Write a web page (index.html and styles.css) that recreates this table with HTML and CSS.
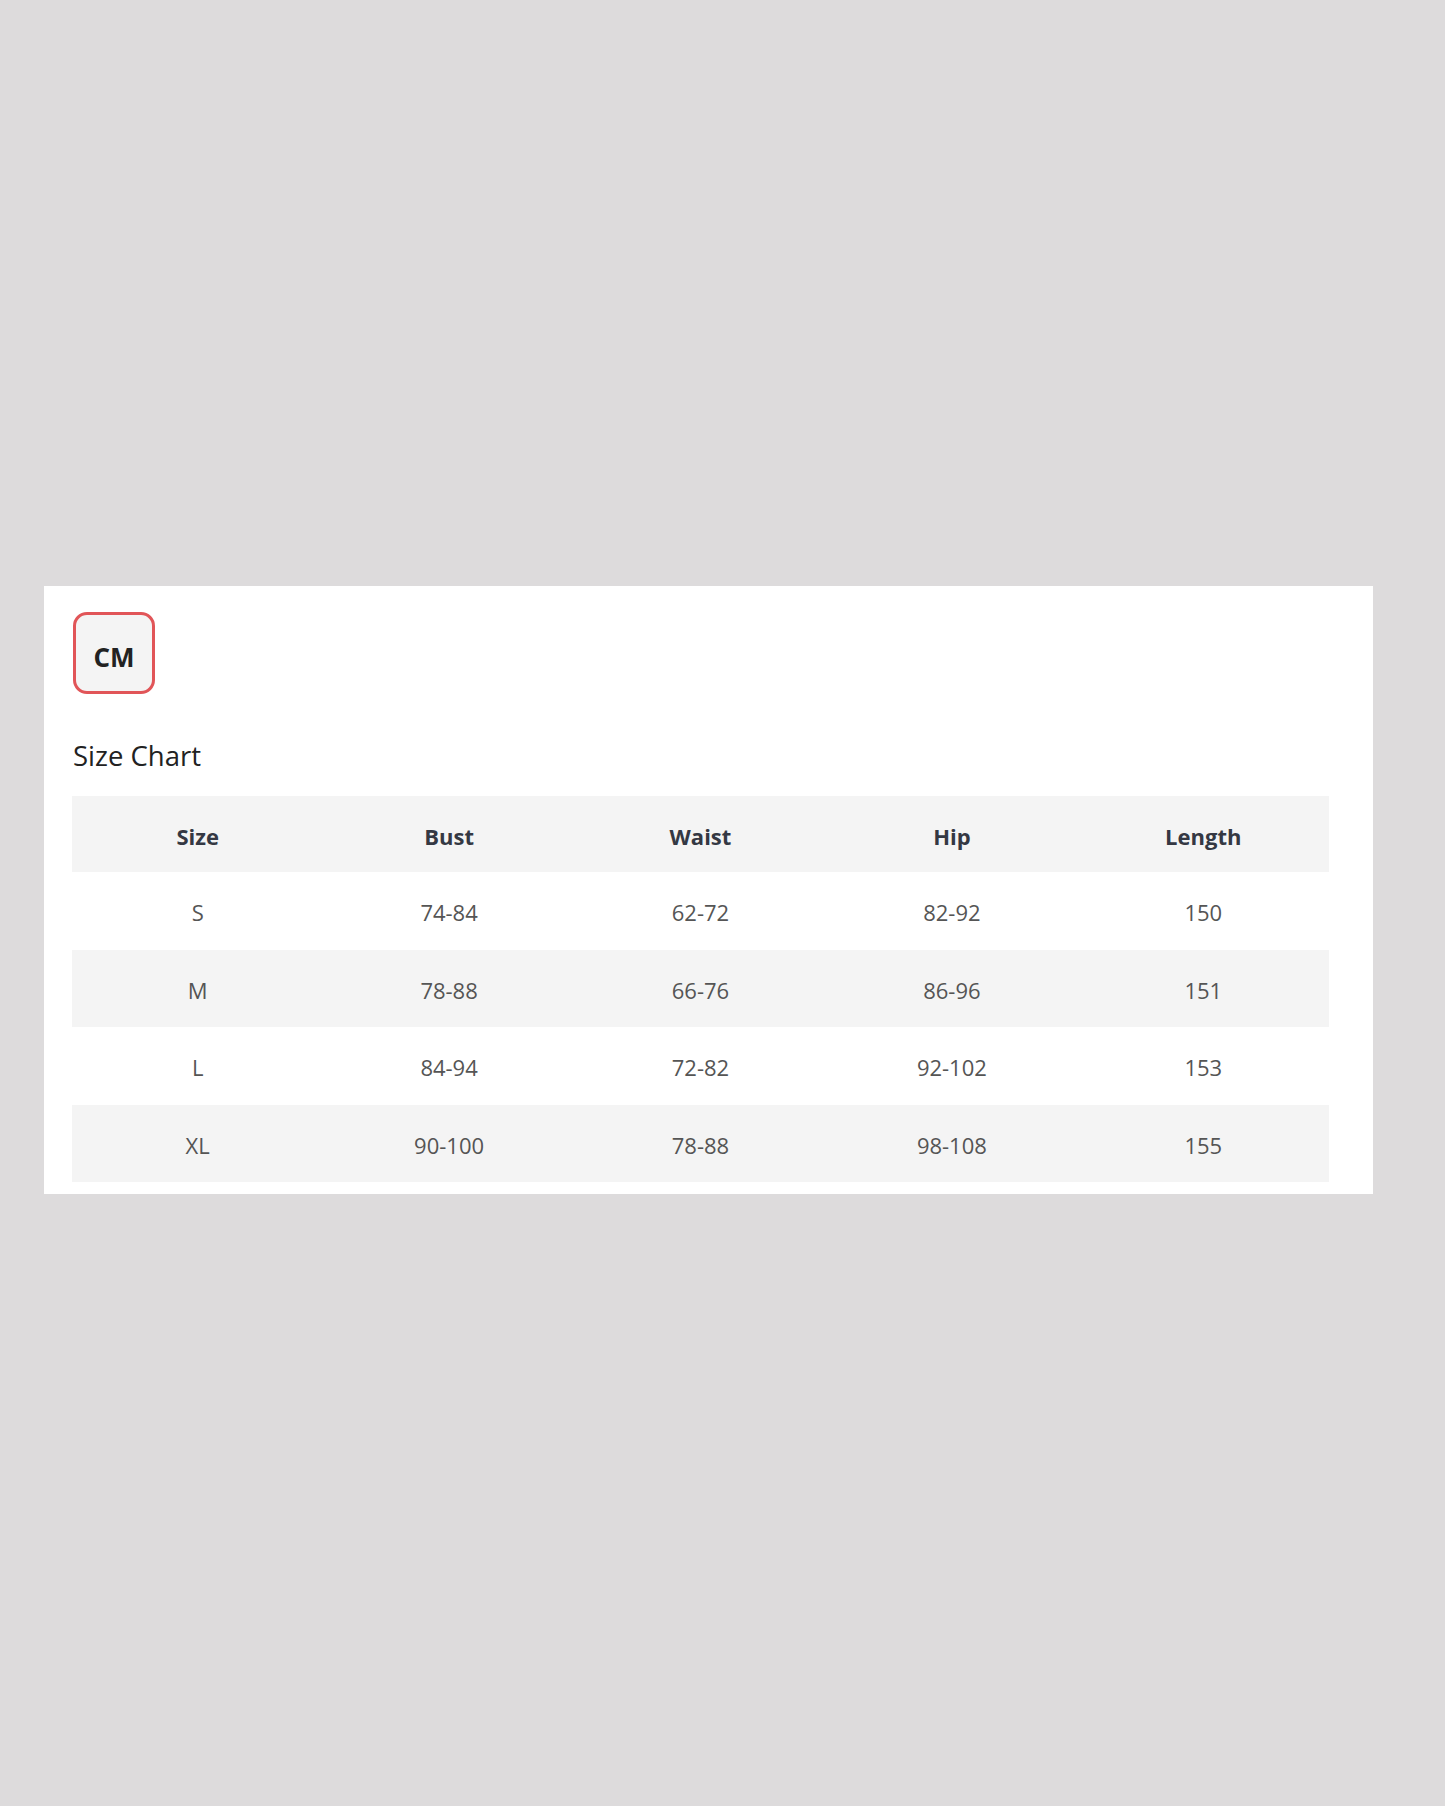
FILE: index.html
```html
<!DOCTYPE html>
<html lang="en">
<head>
<meta charset="utf-8">
<title>Size Chart</title>
<link rel="stylesheet" href="styles.css">
</head>
<body>
<div class="panel">
  <div class="unit-tab">CM</div>
  <h2 class="title">Size Chart</h2>
  <table class="chart">
    <thead>
      <tr><th>Size</th><th>Bust</th><th>Waist</th><th>Hip</th><th>Length</th></tr>
    </thead>
    <tbody>
      <tr><td>S</td><td>74-84</td><td>62-72</td><td>82-92</td><td>150</td></tr>
      <tr class="alt"><td>M</td><td>78-88</td><td>66-76</td><td>86-96</td><td>151</td></tr>
      <tr><td>L</td><td>84-94</td><td>72-82</td><td>92-102</td><td>153</td></tr>
      <tr class="alt"><td>XL</td><td>90-100</td><td>78-88</td><td>98-108</td><td>155</td></tr>
    </tbody>
  </table>
</div>
</body>
</html>
```
FILE: styles.css
```css
html, body {
  margin: 0;
  padding: 0;
  background: #dddbdc;
}
body {
  font-family: "Open Sans", "Noto Sans", sans-serif;
  padding-top: 586px;
  padding-left: 44px;
  height: 1220px;
}
.panel {
  box-sizing: border-box;
  width: 1329px;
  height: 608px;
  background: #ffffff;
  padding: 26px 44px 0 28px;
}
.unit-tab {
  box-sizing: border-box;
  width: 82px;
  height: 82px;
  margin-left: 1px;
  padding-top: 8px;
  border: 3px solid #e15558;
  border-radius: 14px;
  background: #f4f4f4;
  display: flex;
  align-items: center;
  justify-content: center;
  font-size: 26px;
  font-weight: 700;
  color: #222222;
}
.title {
  margin: 44px 0 0 1px;
  font-size: 27.5px;
  line-height: 36px;
  font-weight: 400;
  color: #222222;
}
.chart {
  margin-top: 22px;
  width: 1257px;
  border-collapse: collapse;
  table-layout: fixed;
}
.chart th, .chart td {
  padding: 3px 0 0;
  text-align: center;
  vertical-align: middle;
}
.chart thead tr {
  height: 76px;
  background: #f4f4f4;
}
.chart th {
  font-size: 22px;
  font-weight: 700;
  color: #343843;
}
.chart tbody tr {
  height: 77.5px;
}
.chart tbody tr.alt {
  background: #f4f4f4;
}
.chart td {
  font-size: 22px;
  font-weight: 400;
  color: #555555;
}
```
